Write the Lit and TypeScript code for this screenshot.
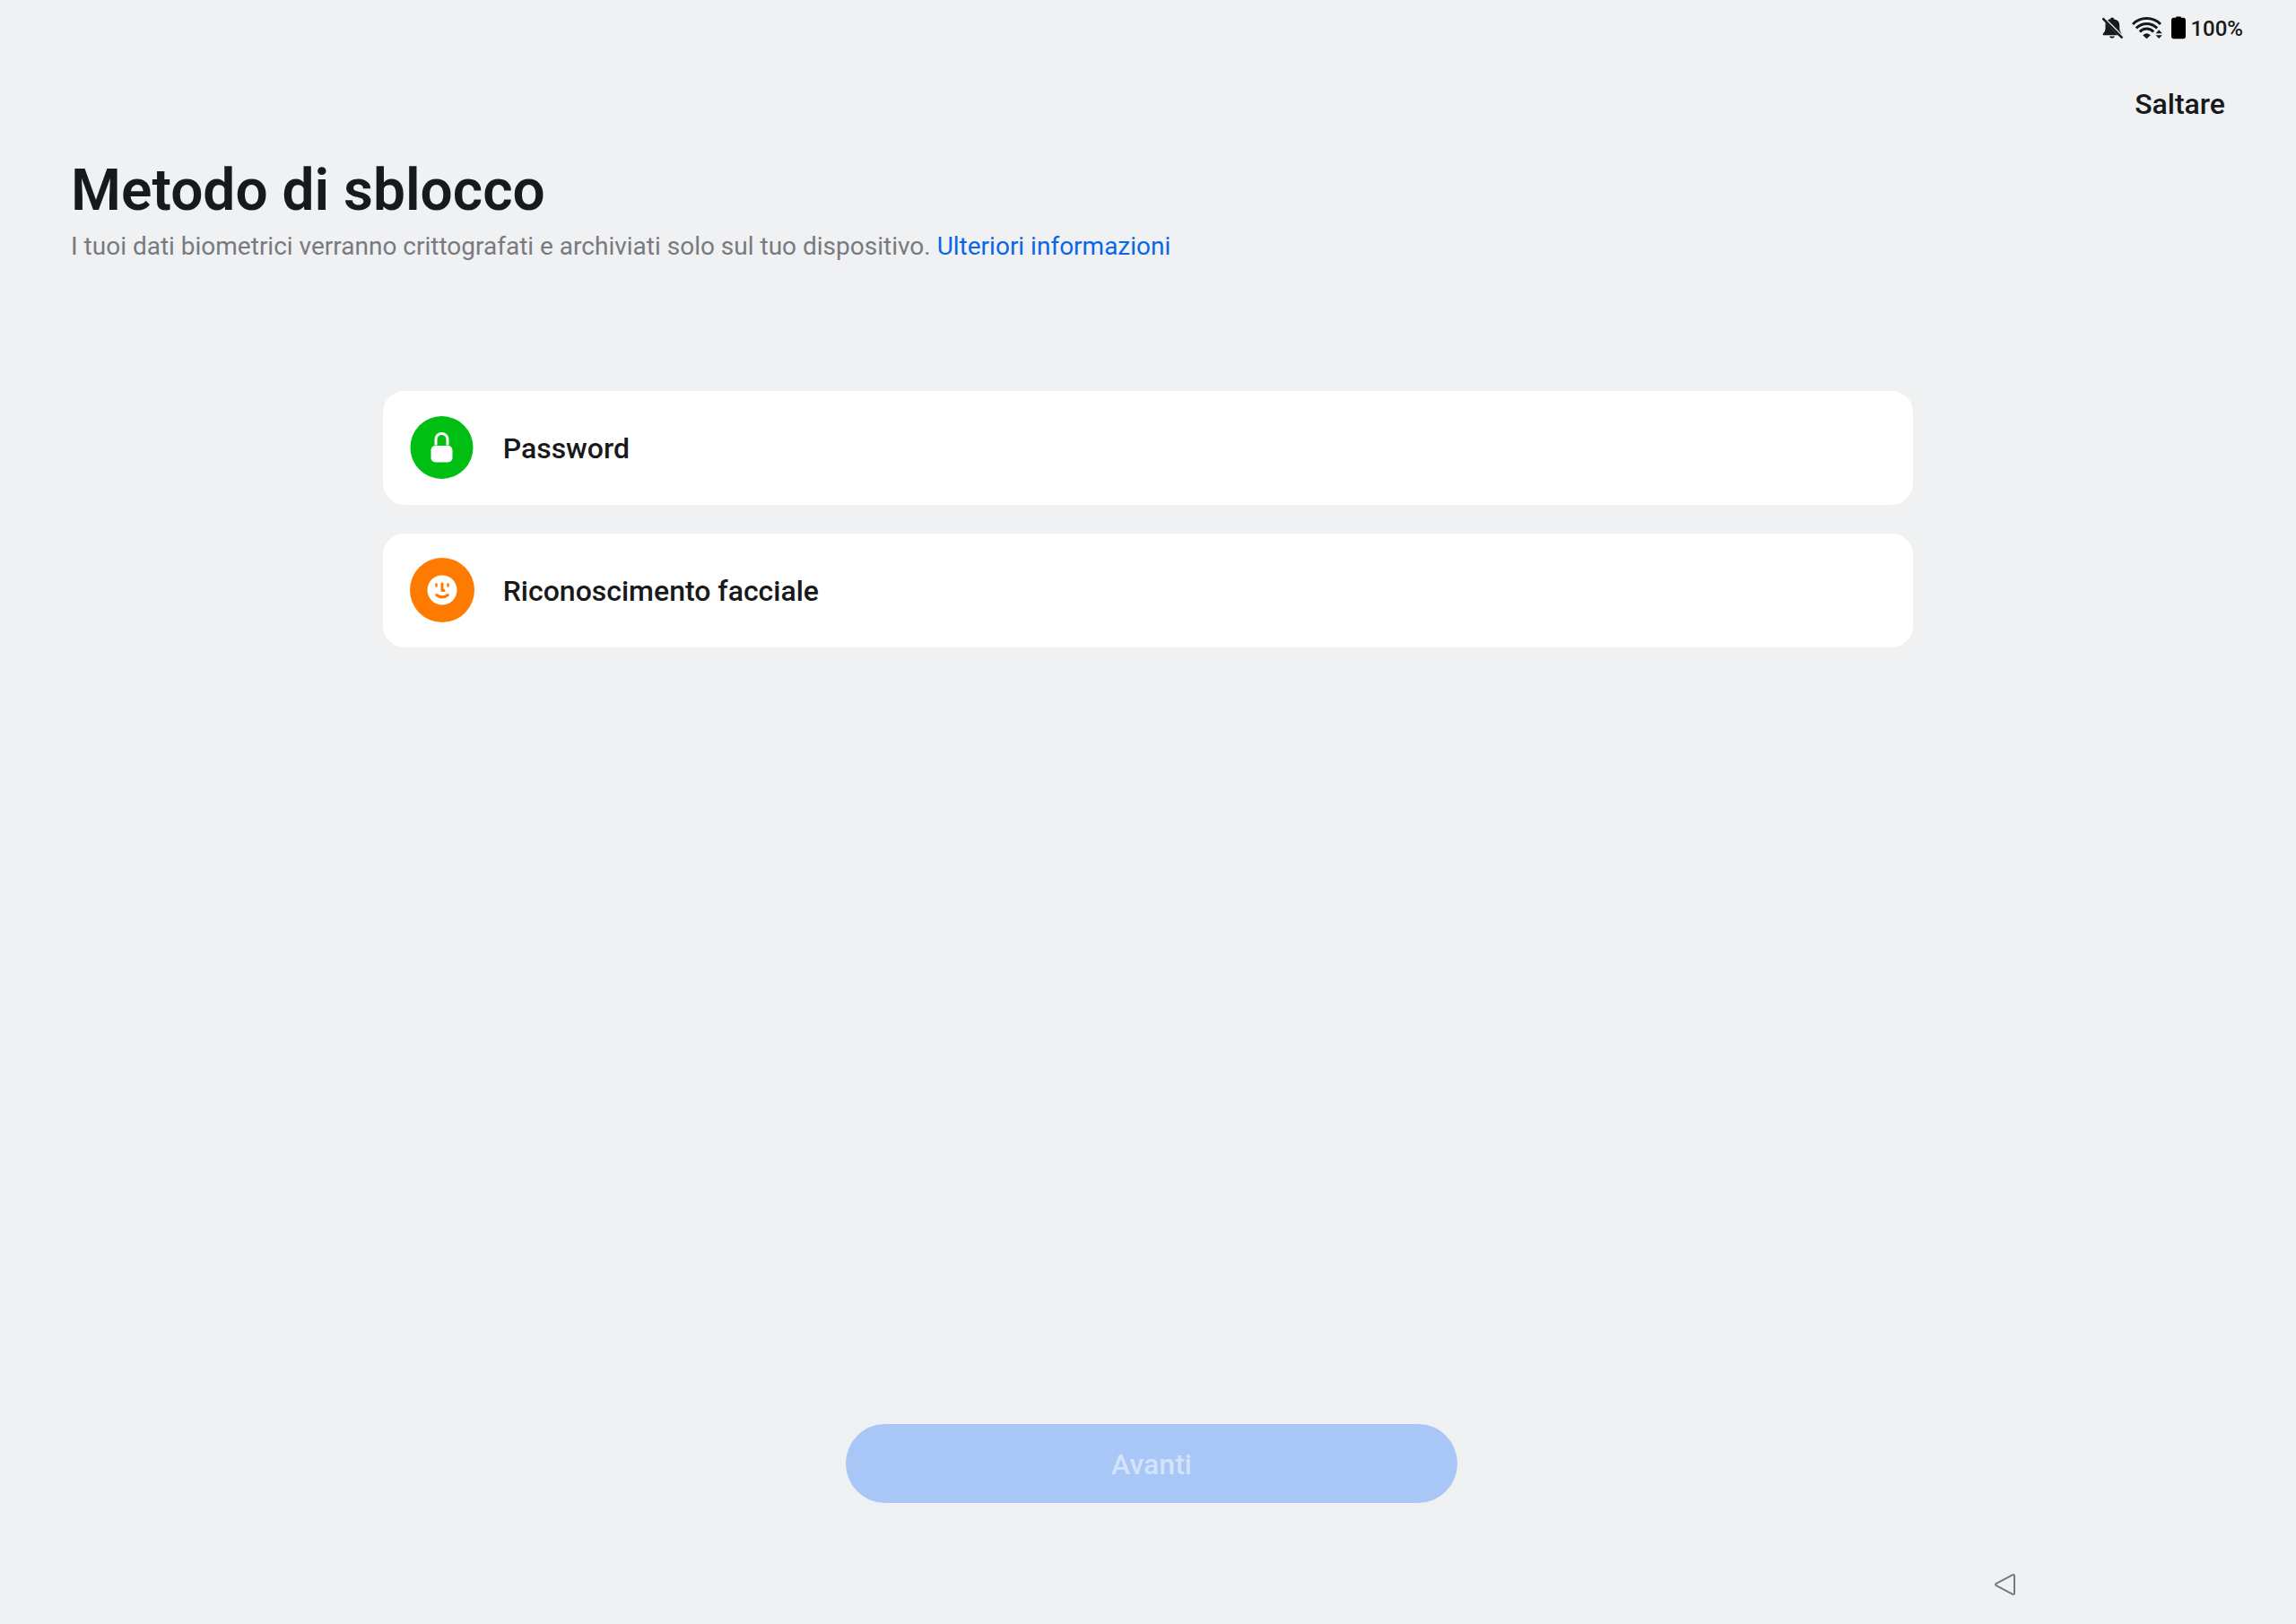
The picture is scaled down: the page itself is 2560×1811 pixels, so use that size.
import { LitElement, html, css, TemplateResult } from "lit";
import { customElement } from "lit/decorators.js";

interface UnlockMethod {
  label: string;
  icon: TemplateResult;
}

const lockIcon = html`<svg class="badge" viewBox="0 0 72 72" aria-hidden="true">
  <circle cx="35.5" cy="36" r="35" fill="#00be12" />
  <path d="M29 33.500V27a6.500 6.500 0 0 1 13 0v6.500" fill="none" stroke="#fff" stroke-width="3" />
  <rect x="23.500" y="34" width="24" height="18.500" rx="5" fill="#fff" />
</svg>`;

const faceIcon = html`<svg class="badge" viewBox="0 0 72 72" aria-hidden="true">
  <circle cx="36" cy="36" r="36" fill="#ff7a00" />
  <circle cx="36" cy="36" r="16.500" fill="#fff" />
  <g fill="none" stroke="#ff7a00" stroke-linecap="round" stroke-linejoin="round">
    <path d="M29.500 29.500v2M42.500 29.500v2" stroke-width="2.600" />
    <path d="M36 29v7.500h2" stroke-width="3" />
    <path d="M29.800 41.500q6.200 4.800 12.600 0" stroke-width="3" />
  </g>
</svg>`;

const bellOffIcon = html`<svg class="bell" viewBox="0 0 24 24" aria-label="Silenzioso" role="img">
  <path d="M5.500 3.600A7.500 7.500 0 0 1 9 2.200V2q0-1.500 2-1.500T13 2v.2Q19.200 3.500 19.200 9v4q0 2 1.500 4.200L22 20Z" />
  <path d="M3.700 6.200 17.600 20.200H.8V18.600Q3.500 16 3.500 13V9Q3.500 8 3.700 6.200Z" />
  <path d="M7.800 21.600h6.200q-.8 2.100-3.100 2.100t-3.100-2.100Z" />
  <path d="M.4 1.400 22.400 23.400" fill="none" stroke="currentColor" stroke-width="2.500" />
  <path d="M2.200 0 24 21.800" fill="none" stroke="#eff1f3" stroke-width="1" />
</svg>`;

const wifiIcon = html`<svg class="wifi" viewBox="0 0 34 24" aria-label="Wi-Fi" role="img">
  <g fill="none" stroke="currentColor" stroke-width="3">
    <path d="M1 8Q7.500 1.600 16.500 1.600T32 8" />
    <path d="M4.800 12.400Q10 7.400 16.500 7.400T28.200 12.400" />
    <path d="M8.800 16.600Q12 13 16.500 13T24.200 16.600" />
  </g>
  <path d="M12.200 20.200q4.300-4 8.600 0L16.500 24.200Z" />
  <path d="M26.600 18.200 30.200 14.200 33.800 18.200ZM26.600 20.200h7.200L30.200 24Z" />
</svg>`;

const batteryIcon = html`<svg class="battery" viewBox="0 0 16 26" aria-hidden="true">
  <path d="M5 1.800Q5 .6 6.200.6h3.600Q11 .6 11 1.800h2.200Q16 2 16 4.800V22.500Q16 25.300 13.200 25.300H2.800Q0 25.300 0 22.500V4.800Q0 2 2.800 1.800Z" fill="#000" />
</svg>`;

@customElement("status-bar")
export class StatusBar extends LitElement {
  static styles = css`
    :host {
      display: flex;
      justify-content: flex-end;
      align-items: center;
      height: 62px;
      padding: 0 59px;
      color: #17191b;
    }
    svg {
      display: block;
      fill: currentColor;
    }
    .bell { width: 24px; height: 24px; margin-right: 9px; }
    .wifi { width: 34px; height: 24px; margin-right: 10px; }
    .battery { width: 16px; height: 26px; margin-right: 5px; }
    .level { padding-top: 2px; font-size: 24px; line-height: 28px; font-weight: 500; }
  `;

  render() {
    return html`${bellOffIcon}${wifiIcon}${batteryIcon}<span class="level">100%</span>`;
  }
}

@customElement("app-root")
export class AppRoot extends LitElement {
  static styles = css`
    :host {
      display: flex;
      flex-direction: column;
      box-sizing: border-box;
      min-height: 100vh;
      background: #eff1f3;
      color: #17191b;
      font-family: Roboto, "Liberation Sans", sans-serif;
    }
    button {
      border: 0;
      margin: 0;
      font: inherit;
      color: inherit;
      cursor: pointer;
    }
    .top {
      display: flex;
      justify-content: flex-end;
      padding: 35px 79px 0;
    }
    .skip {
      padding: 0;
      background: none;
      font-size: 32px;
      line-height: 38px;
      font-weight: 500;
    }
    .intro { padding: 38px 79px 0; }
    .title {
      margin: 0;
      font-size: 64px;
      line-height: 80px;
      font-weight: 600;
    }
    .note {
      margin: 4px 0 0;
      font-size: 28px;
      line-height: 36px;
      color: #787a7d;
    }
    .link {
      color: #0a66e8;
      text-decoration: none;
    }
    .methods {
      display: grid;
      grid-template-columns: 1fr 4fr 1fr;
      row-gap: 32px;
      margin: 0;
      padding: 143px 0 0;
      list-style: none;
    }
    .item {
      grid-column: 2;
      display: flex;
    }
    .method {
      flex: 1;
      display: flex;
      align-items: center;
      gap: 32px;
      padding: 27px 30px 28px;
      border-radius: 24px;
      background: #fff;
      font-size: 32px;
      line-height: 38px;
      font-weight: 500;
      text-align: left;
    }
    .label { padding-top: 2px; }
    .badge {
      display: block;
      width: 72px;
      height: 72px;
    }
    .actions {
      display: flex;
      justify-content: center;
      margin-top: auto;
      padding: 48px 0 0 8px;
    }
    .next {
      width: 100%;
      max-width: 682px;
      padding: 26px 32px 24px;
      border-radius: 44px;
      background: #a8c6f6;
      color: #d3e3fb;
      font-size: 32px;
      line-height: 38px;
      font-weight: 500;
    }
    .nav {
      display: flex;
      justify-content: flex-end;
      padding: 75px 308px 28px;
    }
    .back {
      padding: 0;
      background: none;
    }
    .triangle {
      display: block;
      width: 32px;
      height: 32px;
    }
  `;

  private methods: UnlockMethod[] = [
    { label: "Password", icon: lockIcon },
    { label: "Riconoscimento facciale", icon: faceIcon },
  ];

  render() {
    return html`
      <status-bar></status-bar>
      <header class="top"><button class="skip">Saltare</button></header>
      <section class="intro">
        <h1 class="title">Metodo di sblocco</h1>
        <p class="note">
          I tuoi dati biometrici verranno crittografati e archiviati solo sul tuo dispositivo.
          <a class="link" href="#info">Ulteriori informazioni</a>
        </p>
      </section>
      <ul class="methods">
        ${this.methods.map(
          (m) => html`<li class="item">
            <button class="method">${m.icon}<span class="label">${m.label}</span></button>
          </li>`
        )}
      </ul>
      <div class="actions"><button class="next" disabled>Avanti</button></div>
      <nav class="nav">
        <button class="back" aria-label="Indietro">
          <svg class="triangle" viewBox="0 0 32 32" aria-hidden="true">
            <path
              d="M5.800 14.800 24.200 5.200Q26 4.600 26 6.600V25.400Q26 27.400 24.200 26.800L5.800 17.200Q4 16 5.800 14.800Z"
              fill="none"
              stroke="#77797c"
              stroke-width="2"
              stroke-linejoin="round"
            />
          </svg>
        </button>
      </nav>
    `;
  }
}
